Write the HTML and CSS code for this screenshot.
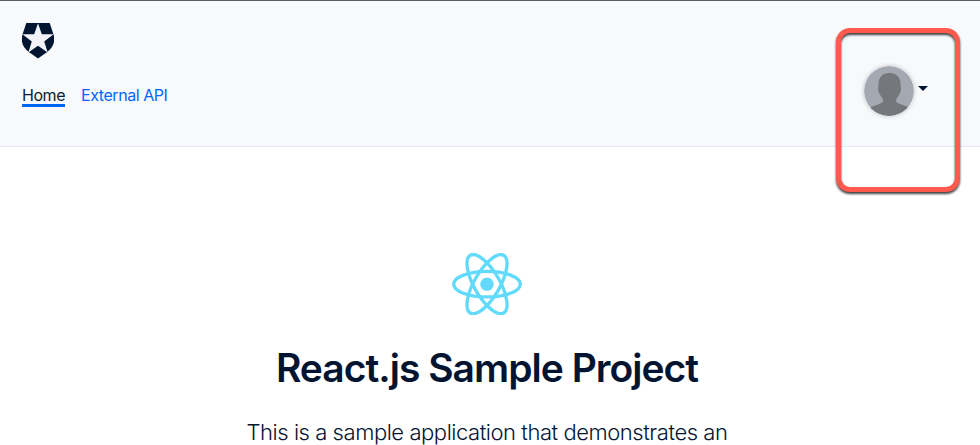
FILE: index.html
```html
<!DOCTYPE html>
<html lang="en">
<head>
<meta charset="utf-8">
<title>React.js Sample Project</title>
<link rel="stylesheet" href="styles.css">
</head>
<body>
<header class="navbar">
  <div class="navbar-left">
    <svg class="brand" viewBox="0 0 32 36" aria-hidden="true">
      <path class="shield" d="M4.3 0H27.7L31.5 11.5C33.6 18.5 31 24.6 25.2 29L16 35.5L6.8 29C1 24.6-1.6 18.5.5 11.5Z"/>
      <path class="star" d="M16 .3L19.8 11.3H31.6L22.2 18.4L25.7 29.4L16 22.7L6.3 29.4L9.8 18.4L.4 11.3H12.2Z"/>
    </svg>
    <nav class="links">
      <a class="link active">Home</a>
      <a class="link">External API</a>
    </nav>
  </div>
  <div class="profile">
    <svg class="avatar" viewBox="0 0 50 50" aria-hidden="true">
      <defs><clipPath id="round"><circle cx="25" cy="25" r="25"/></clipPath></defs>
      <g clip-path="url(#round)">
        <path class="avatar-bg" d="M0 0H50V50H0Z"/>
        <path class="avatar-person" d="M25.500 7C32.500 7 36.500 11.500 36.500 17.500C36.500 19.500 36.500 20 37 21.500C37.300 24 36.500 26 35.500 28C34 31 32 32.500 32 35C32.500 37.500 38 38.500 43.500 40.800L50 50H0L6.500 41.500C12 39 18.500 37.500 19.200 35C19.200 32.500 17 31 15.700 28C14.700 26 13.700 24 14.200 21.500C14.600 20 14.500 19 14.500 17.500C14.800 11 19 7 25.500 7Z"/>
      </g>
    </svg>
    <span class="caret"></span>
    <div class="highlight"></div>
  </div>
</header>
<main class="hero">
  <svg class="react" viewBox="-11.5 -10.232 23 20.463" aria-hidden="true">
    <circle r="2.2" fill="#61dafb"/>
    <g fill="none" stroke="#61dafb" stroke-width="1.1">
      <ellipse rx="10.95" ry="4.2"/>
      <ellipse rx="10.95" ry="4.2" transform="rotate(60)"/>
      <ellipse rx="10.95" ry="4.2" transform="rotate(120)"/>
    </g>
  </svg>
  <h1 class="title">React.js Sample Project</h1>
  <p class="lead">This is a sample application that demonstrates an</p>
</main>
</body>
</html>
```
FILE: styles.css
```css
* { box-sizing: border-box; }
body {
  margin: 0;
  height: 445px;
  overflow: hidden;
  background: #fff;
  color: #031431;
  font-family: Inter, "Liberation Sans", sans-serif;
}
.navbar {
  display: flex;
  justify-content: space-between;
  height: 147px;
  padding: 22px 50px 0 22px;
  background: #f8f9fb;
  border-top: 1px solid #5d5b62;
  border-bottom: 1px solid #e6e9f3;
}
.brand { display: block; width: 32px; height: 36px; }
.shield { fill: #001630; }
.star { fill: #f2f3f8; }
.links { display: flex; gap: 16px; margin-top: 25px; }
.link {
  height: 23px;
  line-height: 22px;
  font-size: 16px;
  letter-spacing: -0.45px;
  color: #0066f9;
  white-space: nowrap;
}
.active { color: #0a1c38; border-bottom: 3px solid #0066f9; }
.profile {
  position: relative;
  display: flex;
  gap: 4px;
  width: 66px;
  padding-top: 42.5px;
}
.avatar {
  flex: none;
  width: 50px;
  height: 50px;
  border-radius: 50%;
  box-shadow: 0 0 4px #b9bcc5;
}
.avatar-bg { fill: #a4a8b0; }
.avatar-person { fill: #74777c; }
.caret {
  flex: none;
  width: 10px;
  height: 5px;
  margin-top: 20.5px;
  border: 5px solid transparent;
  border-top-color: #031431;
  border-bottom: 0;
}
.highlight {
  position: absolute;
  left: -28px;
  top: 5px;
  width: 124px;
  height: 164px;
  border: 5px solid #ff5a4d;
  border-radius: 14px;
  filter: drop-shadow(0 2px 1px rgba(0, 0, 0, .75));
}
.hero {
  display: flex;
  flex-direction: column;
  align-items: center;
  width: 974px;
  padding-top: 106px;
}
.react { width: 70px; height: 62.3px; }
.title {
  margin: 28.7px 0 0;
  font-size: 39px;
  font-weight: 600;
  line-height: 48px;
  letter-spacing: -0.98px;
  white-space: nowrap;
}
.lead {
  margin: 26px 0 0;
  font-size: 22px;
  font-weight: 300;
  line-height: 28px;
  letter-spacing: -0.45px;
  white-space: nowrap;
}
```
